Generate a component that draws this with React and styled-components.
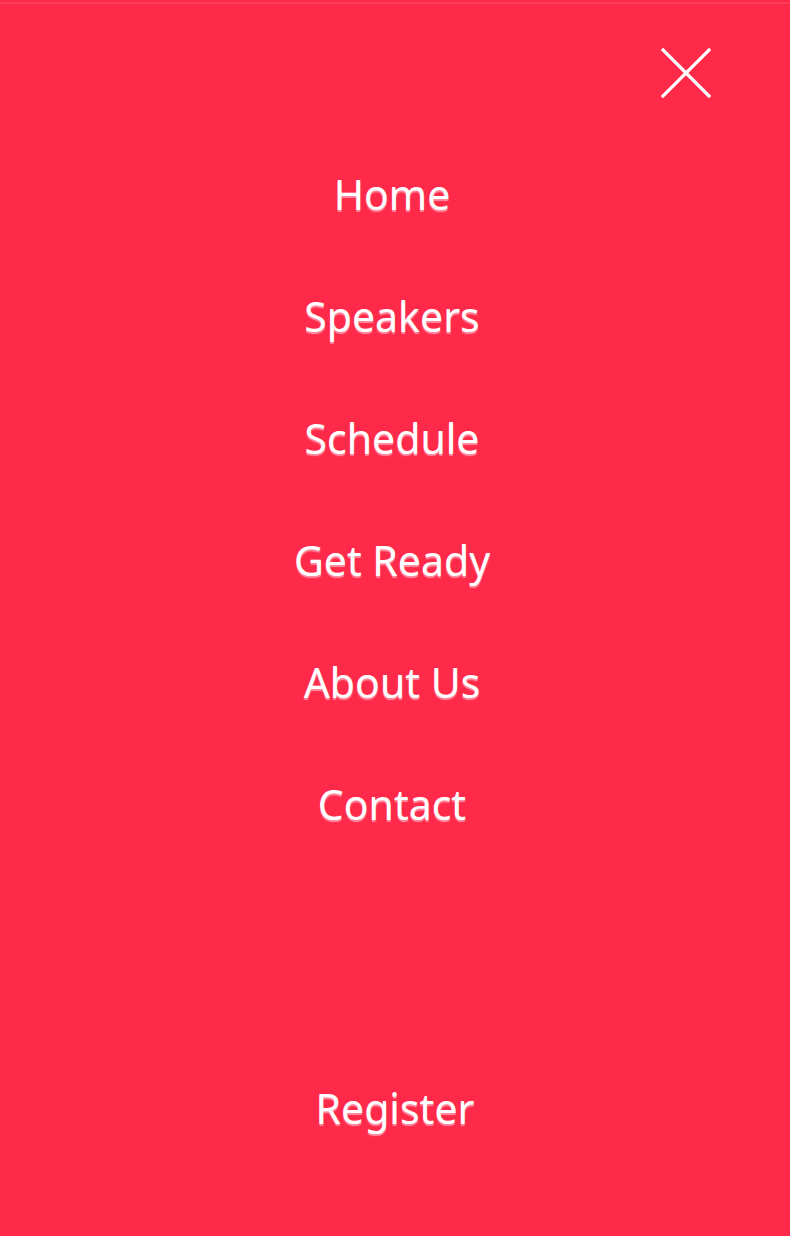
import React from "react";
import styled, { createGlobalStyle } from "styled-components";

const Global = createGlobalStyle`
  html, body { margin: 0; padding: 0; background: #ff2a4a; }
  body { font-family: "Noto Sans", "Open Sans", sans-serif; }
`;

const Panel = styled.div`
  width: 790px;
  height: 1236px;
  box-sizing: border-box;
  background: #ff2a4a;
  border-top: 2px solid #ff2a4a;
  display: flex;
  flex-direction: column;
  &::before {
    content: "";
    display: block;
    height: 2px;
    background: #ff3d5b;
  }
`;

const TopBar = styled.div`
  display: flex;
  justify-content: flex-end;
  padding: 42px 77px 0 0;
  height: 62px;
`;

const CloseButton = styled.button`
  width: 54px;
  height: 54px;
  padding: 0;
  border: 0;
  background: transparent;
  display: flex;
  align-items: center;
  justify-content: center;
  cursor: pointer;
`;

const Nav = styled.nav`
  display: flex;
  flex-direction: column;
  align-items: center;
  margin-top: 60px;
  padding-right: 6px;
`;

const NavLink = styled.a`
  display: block;
  height: 122px;
  line-height: 52px;
  font-size: 41px;
  font-weight: 400;
  color: #ffffff;
  text-decoration: none;
  text-shadow: 0 2px 1px rgba(255, 150, 170, 0.9);
`;

const Footer = styled.div`
  margin-top: auto;
  display: flex;
  justify-content: center;
  padding-bottom: 102px;
`;

const Register = styled(NavLink)`
  height: auto;
`;

const items = ["Home", "Speakers", "Schedule", "Get Ready", "About Us", "Contact"];

export default function App() {
  return (
    <>
      <Global />
      <Panel>
        <TopBar>
          <CloseButton aria-label="Close">
            <svg width="50" height="50" viewBox="0 0 50 50">
              <path d="M2 2 L48 48 M48 2 L2 48" stroke="#fff" strokeWidth="3.2" strokeLinecap="square" />
            </svg>
          </CloseButton>
        </TopBar>
        <Nav>
          {items.map((t) => (
            <NavLink key={t} href="#">{t}</NavLink>
          ))}
        </Nav>
        <Footer>
          <Register href="#">Register</Register>
        </Footer>
      </Panel>
    </>
  );
}
